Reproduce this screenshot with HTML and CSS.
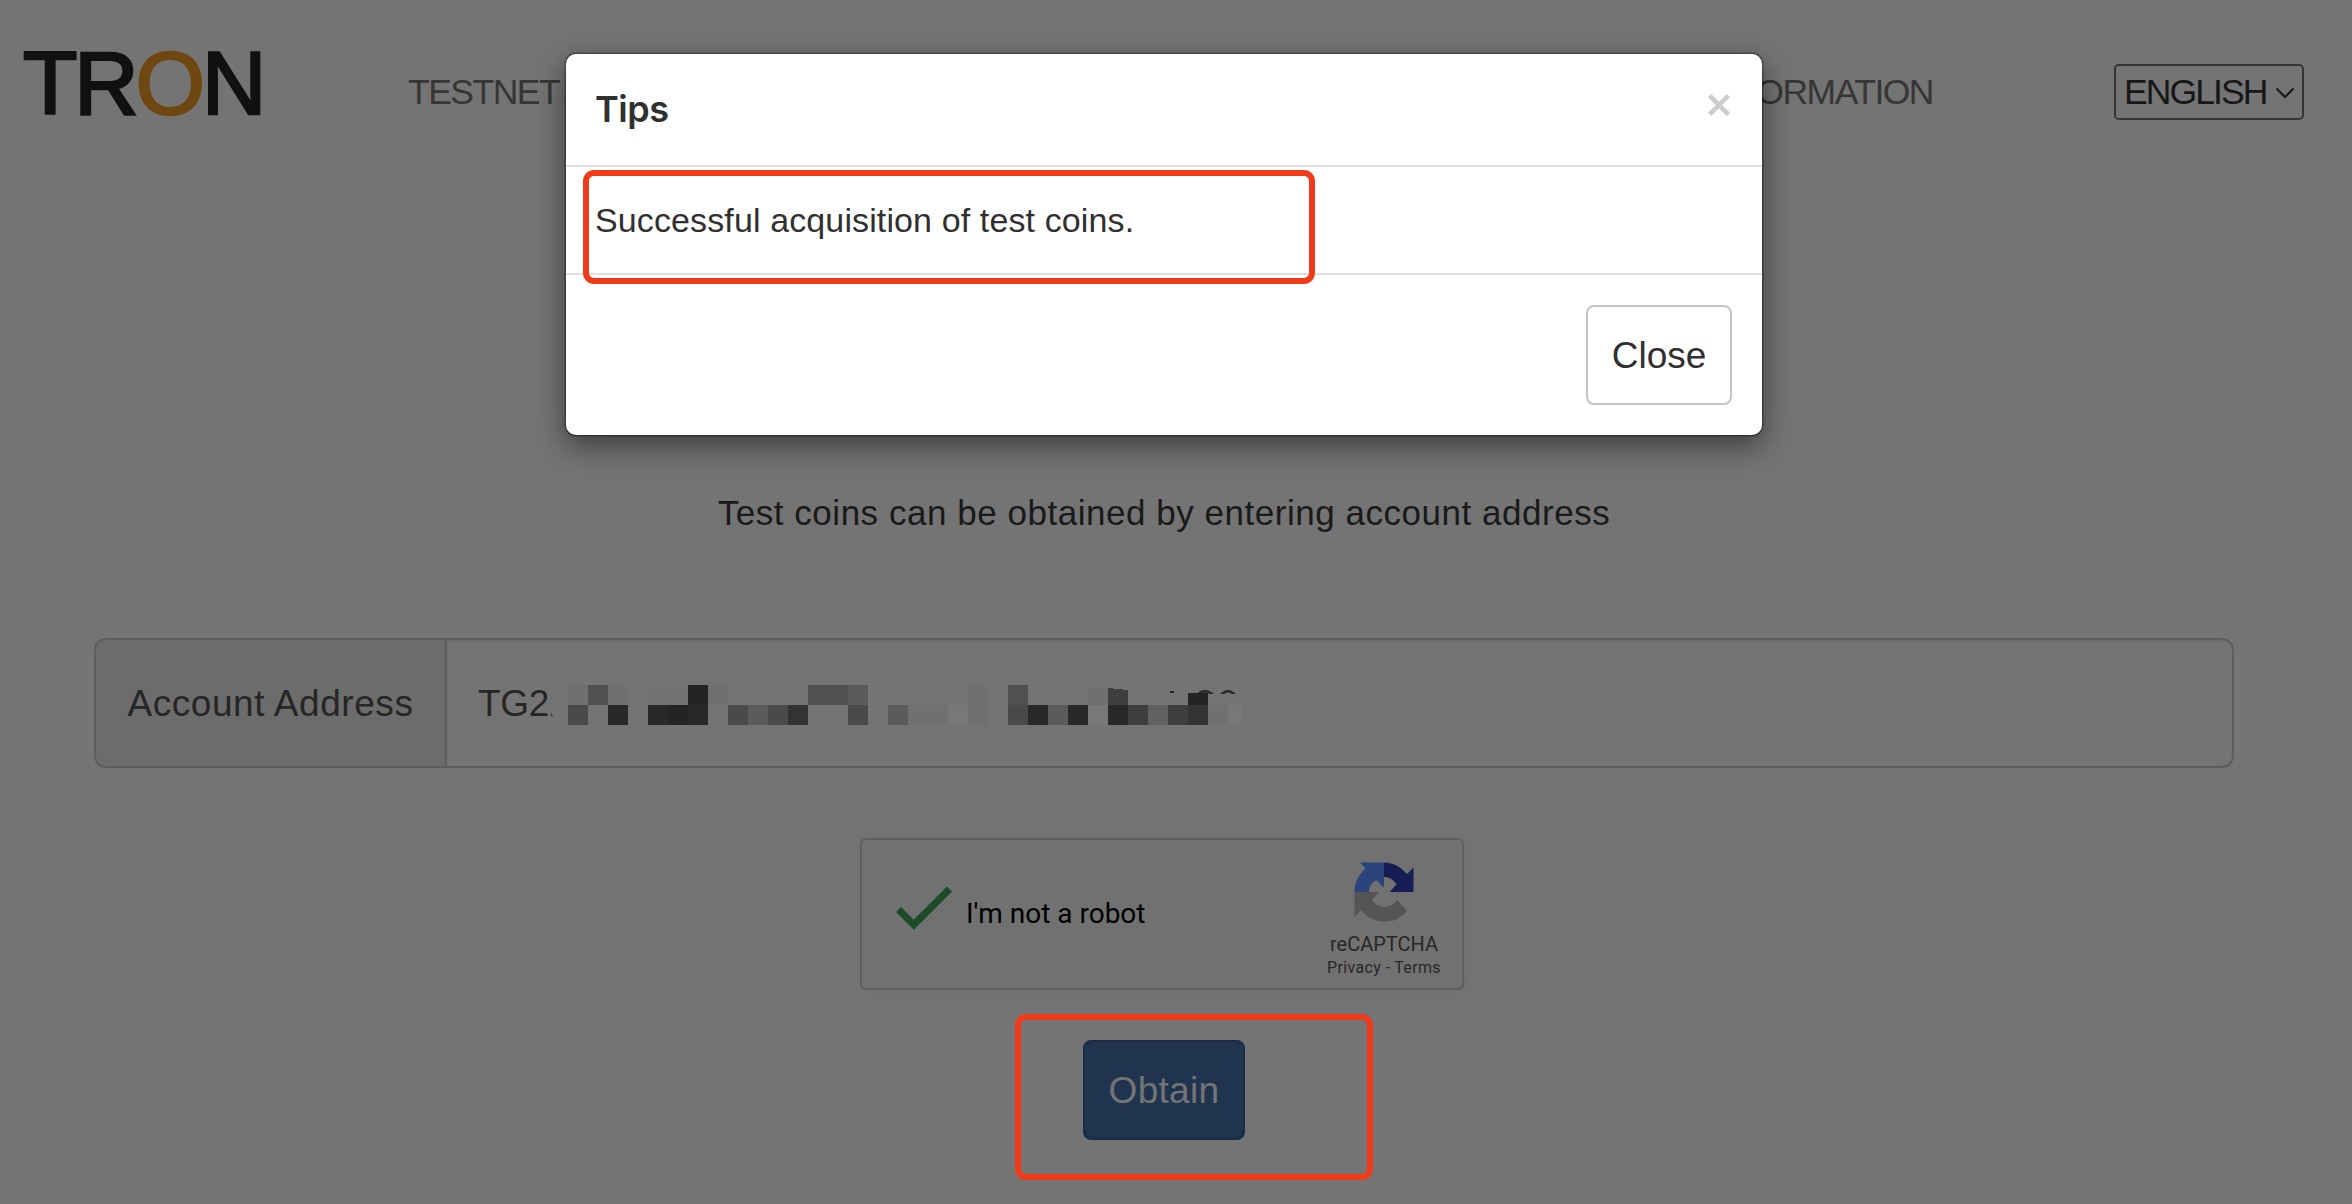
FILE: index.html
```html
<!DOCTYPE html>
<html lang="en">
<head>
<meta charset="utf-8">
<title>TRON Testnet</title>
<link rel="stylesheet" href="styles.css">
</head>
<body>
<header class="header">
  <div class="logo">TR<span class="logo-o">O</span>N</div>
  <nav class="nav"><a>TESTNET</a><a>INFORMATION</a></nav>
  <div class="language"><span>ENGLISH</span>
    <svg width="20" height="12" viewBox="0 0 20 12"><path d="M1.5 1.5 10 10 18.500 1.500" fill="none" stroke="#171717" stroke-width="2"/></svg>
  </div>
</header>
<main class="main">
  <p class="intro">Test coins can be obtained by entering account address</p>
  <div class="address">
    <label class="address-label">Account Address</label>
    <div class="address-input"><span>TG2</span>
      <svg class="mosaic" width="700" height="42" viewBox="-20 -2 700 42" shape-rendering="crispEdges">
        <path fill="#707070" d="M0 0h20v20H0zM40 0h20v20H40zM140 0h20v20h-20zM400 0h20v40h-20zM520 2l20 2v16h-20zM340 20h40v20h-40zM640 20h20v20h-20z"/>
        <path fill="#727272" d="M80 0h40v20H80z"/>
        <path fill="#505050" d="M20 0h20v20H20zM240 0h40v20h-40zM440 0h20v20h-20z"/>
        <path fill="#5b5b5b" d="M280 0h20v20h-20zM180 20h20v20h-20zM320 20h20v20h-20zM480 20h20v20h-20z"/>
        <path fill="#242424" d="M120 0h20v20h-20zM620 8h20v12h-20zM100 20h20v20h-20z"/>
        <path fill="#292929" d="M40 20h20v20H40zM80 20h20v20H80zM120 20h20v20h-20zM460 20h20v20h-20zM500 20h20v20h-20zM540 20h20v20h-20z"/>
        <path fill="#4a4a4a" d="M0 20h20v20H0zM160 20h20v20h-20zM200 20h20v20h-20zM280 20h20v20h-20zM440 20h20v20h-20z"/>
        <path fill="#3e3e3e" d="M540 3l20 2v15h-20zM560 20h20v20h-20zM600 20h20v20h-20z"/>
        <path fill="#333" d="M220 20h20v20h-20zM620 20h20v20h-20z"/>
        <path fill="#616161" d="M580 20h20v20h-20z"/>
        <path fill="#787878" d="M380 20h20v20h-20zM520 20h20v20h-20zM660 20h14v20h-14z"/>
        <path fill="#292929" shape-rendering="auto" d="M-17 28l2 3h-2zM602 6h4v2h-4zM628 9q9-8 18 0h-4q-5-3-10 0zM652 9q8-8 16 0h-4q-4-3-8 0z"/>
      </svg>
    </div>
  </div>
  <div class="captcha">
    <svg class="check" width="60" height="46" viewBox="0 0 60 46"><path d="M4.500 23.500 19.800 38.800 55.500 3" fill="none" stroke="#1b4b27" stroke-width="7"/></svg>
    <span class="captcha-text">I'm not a robot</span>
    <div class="captcha-brand">
      <svg width="60" height="60" viewBox="0 0 60 60">
        <path fill="#171e56" d="M30 .500C38 .500 46 4 53 12l6.500-6.500V30H35.500l7-7.500C39 17 35 15 30 15z"/>
        <path fill="#2b447b" d="M30 .500H6l5.500 6C4 13 .500 21 .500 30H15c0-5 2-9 7-12l8 7.500z"/>
        <path fill="#555" d="M.500 30H25l-7 8c5 9 19 9 25 0l10 10.500C42 64 18 63 7 48L.500 55z"/>
      </svg>
      <div class="brand-name">reCAPTCHA</div>
      <div class="brand-links">Privacy - Terms</div>
    </div>
  </div>
  <button class="obtain">Obtain</button>
</main>
<section class="modal">
  <div class="modal-header"><h4>Tips</h4>
    <svg width="22" height="22" viewBox="0 0 22 22"><path d="M1.600 1.600 20.400 20.400M20.400 1.600 1.600 20.400" stroke="#ccc" stroke-width="4.600"/></svg>
  </div>
  <div class="modal-body">Successful acquisition of test coins.</div>
  <div class="modal-footer"><button class="close">Close</button></div>
</section>
<div class="mark mark-message"></div>
<div class="mark mark-obtain"></div>
</body>
</html>
```
FILE: styles.css
```css
* { box-sizing: border-box; }
body {
  margin: 0;
  height: 1204px;
  position: relative;
  overflow: hidden;
  background: #747474;
  color: #1a1a1a;
  font: 36px/1.2 "Liberation Sans", Arial, sans-serif;
}
button { font: inherit; padding: 0; }
.header {
  height: 184px;
  padding: 0 48px 0 23px;
  display: flex;
  align-items: center;
}
.logo {
  width: 385px;
  padding-bottom: 18px;
  font-size: 89px;
  line-height: 1;
  letter-spacing: -3px;
  color: #111;
  -webkit-text-stroke: 2.6px currentColor;
}
.logo-o { color: #6f4710; }
.nav {
  width: 1525px;
  padding-top: 1px;
  display: flex;
  justify-content: space-between;
  color: #363636;
  font-size: 35.5px;
  letter-spacing: -1.5px;
}
.language {
  width: 190px;
  height: 56px;
  margin-left: auto;
  padding: 1px 7px 0 8px;
  display: flex;
  align-items: center;
  justify-content: space-between;
  border: 2px solid #343434;
  border-radius: 5px;
  color: #171717;
  font-size: 35.5px;
  letter-spacing: -1.9px;
}
.main {
  display: flex;
  flex-direction: column;
  align-items: center;
}
.intro {
  margin: 307px 24px 0 0;
  line-height: 44px;
  font-size: 35px;
  letter-spacing: .53px;
}
.address {
  width: 2140px;
  height: 130px;
  margin: 103px 24px 0 0;
  display: flex;
  border: 2px solid #5d5d5d;
  border-radius: 12px;
  color: #262626;
  font-size: 37px;
  overflow: hidden;
}
.address-label {
  width: 351px;
  padding-top: 2px;
  display: flex;
  align-items: center;
  justify-content: center;
  background: #6c6c6c;
  border-right: 2px solid #5d5d5d;
  letter-spacing: .55px;
}
.address-input {
  flex: 1;
  display: flex;
  align-items: center;
  padding: 2px 0 0 31px;
  box-shadow: inset 0 2px 2px rgba(0, 0, 0, .06);
}
.address-input span { width: 70px; white-space: nowrap; letter-spacing: -.3px; }
.captcha {
  width: 604px;
  height: 152px;
  margin: 70px 28px 0 0;
  display: flex;
  border: 2px solid #5f5f5f;
  border-radius: 6px;
  background: #717171;
  box-shadow: 0 0 8px 2px rgba(0, 0, 0, .04);
  font-family: Roboto, sans-serif;
}
.check { margin: 46px 0 0 32px; }
.captcha-text {
  margin: 56px 0 0 12px;
  font-size: 28px;
  line-height: 36px;
  color: #000;
}
.captcha-brand {
  width: 120px;
  margin: 22px 18px 0 auto;
  text-align: center;
  color: #272727;
}
.captcha-brand svg { display: block; margin: 0 auto; }
.brand-name { margin-top: 10px; font-size: 20px; line-height: 24px; }
.brand-links { font-size: 16px; line-height: 20px; margin-top: 2px; letter-spacing: .35px; }
.obtain {
  width: 162px;
  height: 100px;
  margin: 50px 24px 0 0;
  padding-top: 2px;
  border: 2px solid #1b2d49;
  border-radius: 8px;
  background: #203450;
  color: #747474;
  font-size: 37px;
  letter-spacing: .3px;
}
.modal {
  position: absolute;
  left: 566px;
  top: 54px;
  width: 1196px;
  height: 381px;
  border-radius: 10px;
  background: #fff;
  color: #303030;
  box-shadow: 0 0 0 1.500px rgba(0, 0, 0, .3), 0 10px 30px rgba(0, 0, 0, .5);
}
.modal-header {
  height: 113px;
  padding: 0 32px 0 29px;
  display: flex;
  align-items: center;
  justify-content: space-between;
  border-bottom: 2px solid #e0e0e0;
}
.modal-header h4 { margin: 0 0 2px; font: 600 36px/44px Inter, sans-serif; letter-spacing: -.5px; }
.modal-header svg { margin-bottom: 10px; }
.modal-body {
  height: 108px;
  padding: 30px 29px;
  line-height: 46px;
  font-size: 34px;
  letter-spacing: .12px;
  border-bottom: 2px solid #e0e0e0;
}
.modal-footer {
  padding: 30px;
  display: flex;
  justify-content: flex-end;
}
.close {
  width: 146px;
  height: 100px;
  padding-top: 2px;
  border: 2px solid #c5c5c5;
  border-radius: 8px;
  background: #fff;
  color: #303030;
  font-size: 37px;
}
.mark { position: absolute; border: 6px solid #ef3b1a; border-radius: 11px; }
.mark-message { left: 583px; top: 170px; width: 732px; height: 114px; }
.mark-obtain { left: 1015px; top: 1014px; width: 358px; height: 166px; }
```
